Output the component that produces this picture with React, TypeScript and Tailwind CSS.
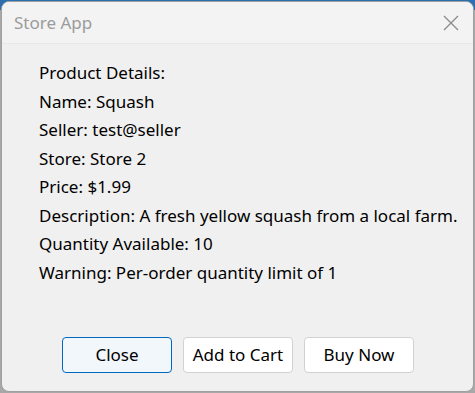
export default function App() {
  const lines = [
    "Product Details:",
    "Name: Squash",
    "Seller: test@seller",
    "Store: Store 2",
    "Price: $1.99",
    "Description: A fresh yellow squash from a local farm.",
    "Quantity Available: 10",
    "Warning: Per-order quantity limit of 1",
  ];

  return (
    <div className="h-[393px] w-[475px] bg-[linear-gradient(to_bottom,#2a6fb0_0px,#2a6fb0_10px,#a8a8a8_10px)] pl-[1px] pt-[1px] font-['Noto_Sans',sans-serif]">
      {/* Dialog window */}
      <div className="flex h-[391px] w-[473px] flex-col overflow-hidden rounded-[8px] border border-[#a0a0a0] bg-[#f0f0f0]">
        <div className="flex h-[42px] items-center justify-between border-b border-[#e8e8e8] bg-[#f3f3f3] pl-[12px] pr-[14px]">
          <span className="text-[17px] text-[#9b9b9b]">Store App</span>
          <svg width="16" height="16" viewBox="0 0 16 16" stroke="#8a8a8a" strokeWidth="1.3" fill="none">
            <path d="M1 1L15 15M15 1L1 15" />
          </svg>
        </div>

        <div className="flex-1 pl-[37px] pt-[15px] text-[17px] leading-[28.5px] text-black">
          {lines.map((l) => (
            <div key={l}>{l}</div>
          ))}
        </div>

        <div className="flex justify-center gap-[11px] pb-[18px] pl-[1px]">
          <button className="h-[36px] w-[110px] rounded-[4px] border border-[#0067c0] bg-[#f2f7fc] text-[17px] text-black">
            Close
          </button>
          <button className="h-[36px] w-[110px] rounded-[4px] border border-[#d2d2d2] bg-white text-[17px] text-black">
            Add to Cart
          </button>
          <button className="h-[36px] w-[110px] rounded-[4px] border border-[#d2d2d2] bg-white text-[17px] text-black">
            Buy Now
          </button>
        </div>
      </div>
    </div>
  );
}
